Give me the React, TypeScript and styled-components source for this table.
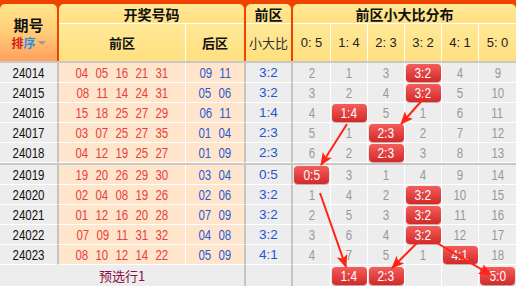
import React from 'react';
import styled, { createGlobalStyle } from 'styled-components';

const GlobalStyle = createGlobalStyle`
  html, body {
    margin: 0;
    padding: 0;
    background: #fff;
  }
  body {
    font-family: "Liberation Sans", Arial, "Noto Sans CJK SC", sans-serif;
  }
  * {
    box-sizing: border-box;
  }
`;

const COLS = '57px 128px 59px 47px 39px 37px 37px 37px 37px 38px';
const NUM_FONT = '"Liberation Sans", Arial, sans-serif';
const CJK_FONT = '"Noto Sans CJK SC", "Liberation Sans", sans-serif';

const Board = styled.div`
  position: relative;
  width: 516px;
  height: 286px;
  overflow: hidden;
  background: #eeeded;
`;

const Head = styled.div`
  display: grid;
  grid-template-columns: ${COLS};
  grid-template-rows: 19px 38px;
  height: 61px;
  padding-top: 4px;
  background: #f04300;
`;

const HeadCell = styled.div<{ $col: string; $row?: string; $top?: boolean; $gap?: boolean; $split?: boolean; $bold?: boolean }>`
  grid-column: ${p => p.$col};
  grid-row: ${p => p.$row || 'auto'};
  margin-left: ${p => (p.$gap ? '2px' : '0')};
  border-left: ${p => (p.$split ? '1px solid #fff' : 'none')};
  border-top: ${p => (p.$top ? 'none' : '1px solid #fff')};
  border-radius: ${p => (p.$top ? '5px 5px 0 0' : '0')};
  background: linear-gradient(#ffe898, #ffe07f);
  display: flex;
  align-items: center;
  justify-content: center;
  font-family: ${CJK_FONT};
  font-size: ${p => (p.$top ? '14px' : '13px')};
  font-weight: ${p => (p.$bold ? 700 : 400)};
  color: ${p => (p.$bold ? '#111' : '#333')};
  white-space: nowrap;
`;

const IdHead = styled.div`
  grid-column: 1;
  grid-row: 1 / span 2;
  border-radius: 5px 5px 0 0;
  background: linear-gradient(#ffe68c 0%, #ffd07a 45%, #ffa05c 100%);
  display: flex;
  flex-direction: column;
  align-items: center;
  justify-content: center;
  gap: 2px;
  font-family: ${CJK_FONT};
`;

const IdTitle = styled.span`
  font-size: 15px;
  font-weight: 700;
  color: #111;
  line-height: 18px;
`;

const SortLink = styled.span`
  display: flex;
  align-items: center;
  font-size: 12px;
  font-weight: 700;
  line-height: 14px;
`;

const SortChar = styled.span<{ $tone: string }>`
  color: ${p => p.$tone};
`;

const Caret = styled.span`
  width: 0;
  height: 0;
  margin-left: 2px;
  border-left: 4px solid transparent;
  border-right: 4px solid transparent;
  border-top: 4px solid #9a9a9a;
`;

const RatioLabel = styled.span`
  font-family: ${NUM_FONT};
  font-size: 13px;
  color: #222;
`;

const Group = styled.div`
  border-top: 2px solid #cbc7c7;
`;

const Row = styled.div<{ $h?: number }>`
  display: grid;
  grid-template-columns: ${COLS};
  height: ${p => p.$h || 20}px;
`;

const Cell = styled.div<{ $edge?: 'thick' | 'thin'; $tone?: 'peach' | 'gray'; $span?: string; $last?: boolean }>`
  grid-column: ${p => p.$span || 'auto'};
  display: flex;
  align-items: center;
  justify-content: center;
  gap: 4.4px;
  background: ${p => (p.$tone === 'peach' ? '#ffe5cc' : '#eeeded')};
  border-left: ${p => (p.$edge === 'thick' ? '2px solid #c6c3c3' : p.$edge === 'thin' ? '1px solid #fff' : 'none')};
  border-bottom: ${p => (p.$last ? 'none' : '1px solid #fff')};
  font-family: ${NUM_FONT};
  font-size: 14px;
  white-space: nowrap;
`;

const Num = styled.span<{ $tone: string }>`
  display: inline-block;
  color: ${p => p.$tone};
  transform: scaleX(0.82);
`;

const Ratio = styled.span`
  color: #2355d5;
  font-size: 13.5px;
`;

const Badge = styled.span`
  display: flex;
  align-items: center;
  justify-content: center;
  width: 35px;
  height: 18px;
  border-radius: 4px;
  background: linear-gradient(#f45d5b, #d12a2a);
  box-shadow: 0 1px 1px rgba(110, 0, 0, 0.35);
  color: #fff;
  font-family: ${NUM_FONT};
  font-size: 14px;

  span {
    display: inline-block;
    transform: scaleX(0.85);
  }
`;

const FootLabel = styled.span`
  font-family: ${CJK_FONT};
  font-size: 13px;
  color: #8b1046;
`;

const Arrows = styled.svg`
  position: absolute;
  left: 0;
  top: 0;
  pointer-events: none;
`;

const LABELS = ['0:5', '1:4', '2:3', '3:2', '4:1', '5:0'];
const HEAD_LABELS = ['0: 5', '1: 4', '2: 3', '3: 2', '4: 1', '5: 0'];

type Draw = { id: string; front: string[]; back: string[]; ratio: string; miss: number[] };

const groups: Draw[][] = [
  [
    { id: '24014', front: ['04', '05', '16', '21', '31'], back: ['09', '11'], ratio: '3:2', miss: [2, 1, 3, 0, 4, 9] },
    { id: '24015', front: ['08', '11', '14', '24', '31'], back: ['05', '06'], ratio: '3:2', miss: [3, 2, 4, 0, 5, 10] },
    { id: '24016', front: ['15', '18', '25', '27', '29'], back: ['06', '11'], ratio: '1:4', miss: [4, 0, 5, 1, 6, 11] },
    { id: '24017', front: ['03', '07', '25', '27', '35'], back: ['01', '04'], ratio: '2:3', miss: [5, 1, 0, 2, 7, 12] },
    { id: '24018', front: ['04', '12', '19', '25', '27'], back: ['01', '09'], ratio: '2:3', miss: [6, 2, 0, 3, 8, 13] },
  ],
  [
    { id: '24019', front: ['19', '20', '26', '29', '30'], back: ['03', '04'], ratio: '0:5', miss: [0, 3, 1, 4, 9, 14] },
    { id: '24020', front: ['02', '04', '08', '19', '26'], back: ['02', '06'], ratio: '3:2', miss: [1, 4, 2, 0, 10, 15] },
    { id: '24021', front: ['01', '12', '16', '20', '28'], back: ['07', '09'], ratio: '3:2', miss: [2, 5, 3, 0, 11, 16] },
    { id: '24022', front: ['07', '09', '11', '31', '32'], back: ['04', '08'], ratio: '3:2', miss: [3, 6, 4, 0, 12, 17] },
    { id: '24023', front: ['08', '10', '12', '14', '22'], back: ['05', '09'], ratio: '4:1', miss: [4, 7, 5, 1, 0, 18] },
  ],
];

const picks = [1, 2, 5];

const arrows = [
  [425, 97, 401, 124],
  [347, 124, 321, 165],
  [320, 193, 346, 267],
  [417, 243, 392, 268],
  [437, 243, 491, 275],
];

const DrawRow: React.FC<{ d: Draw }> = ({ d }) => {
  const hit = Number(d.ratio.split(':')[0]);
  return (
    <Row>
      <Cell><Num $tone="#111">{d.id}</Num></Cell>
      <Cell $edge="thick" $tone="peach">
        {d.front.map((n, i) => <Num key={i} $tone="#e8413c">{n}</Num>)}
      </Cell>
      <Cell $edge="thin" $tone="peach">
        {d.back.map((n, i) => <Num key={i} $tone="#2a5bd7">{n}</Num>)}
      </Cell>
      <Cell $edge="thick"><Ratio>{d.ratio}</Ratio></Cell>
      {d.miss.map((m, i) => (
        <Cell key={i} $edge={i === 0 ? 'thick' : 'thin'}>
          {i === hit ? <Badge><span>{LABELS[i]}</span></Badge> : <Num $tone="#999">{m}</Num>}
        </Cell>
      ))}
    </Row>
  );
};

const App: React.FC = () => {
  return (
    <>
      <GlobalStyle />
      <Board>
        <Head>
          <IdHead>
            <IdTitle>期号</IdTitle>
            <SortLink>
              <SortChar $tone="#d42020">排</SortChar>
              <SortChar $tone="#2a8ee6">序</SortChar>
              <Caret />
            </SortLink>
          </IdHead>
          <HeadCell $col="2 / span 2" $row="1" $top $gap $bold>开奖号码</HeadCell>
          <HeadCell $col="4" $row="1" $top $gap $bold>前区</HeadCell>
          <HeadCell $col="5 / span 6" $row="1" $top $gap $bold>前区小大比分布</HeadCell>
          <HeadCell $col="2" $row="2" $gap $bold>前区</HeadCell>
          <HeadCell $col="3" $row="2" $split $bold>后区</HeadCell>
          <HeadCell $col="4" $row="2" $gap>小大比</HeadCell>
          {HEAD_LABELS.map((l, i) => (
            <HeadCell key={l} $col={String(5 + i)} $row="2" $gap={i === 0} $split={i > 0}>
              <RatioLabel>{l}</RatioLabel>
            </HeadCell>
          ))}
        </Head>
        {groups.map((g, gi) => (
          <Group key={gi}>
            {g.map(d => <DrawRow key={d.id} d={d} />)}
          </Group>
        ))}
        <Row $h={21}>
          <Cell $span="1 / span 3" $last><FootLabel>预选行1</FootLabel></Cell>
          <Cell $edge="thick" $last />
          {LABELS.map((l, i) => (
            <Cell key={l} $edge={i === 0 ? 'thick' : 'thin'} $last>
              {picks.includes(i) && <Badge><span>{l}</span></Badge>}
            </Cell>
          ))}
        </Row>
        <Arrows width="516" height="286" viewBox="0 0 516 286">
          <defs>
            <marker id="tip" markerWidth="13" markerHeight="11" refX="12" refY="5.5" orient="auto" markerUnits="userSpaceOnUse">
              <path d="M0,0 L13,5.5 L0,11 L3,5.5 z" fill="#ff2414" />
            </marker>
          </defs>
          {arrows.map(([x1, y1, x2, y2], i) => (
            <line key={i} x1={x1} y1={y1} x2={x2} y2={y2} stroke="#ff2414" strokeWidth="2" markerEnd="url(#tip)" />
          ))}
        </Arrows>
      </Board>
    </>
  );
};

export default App;
